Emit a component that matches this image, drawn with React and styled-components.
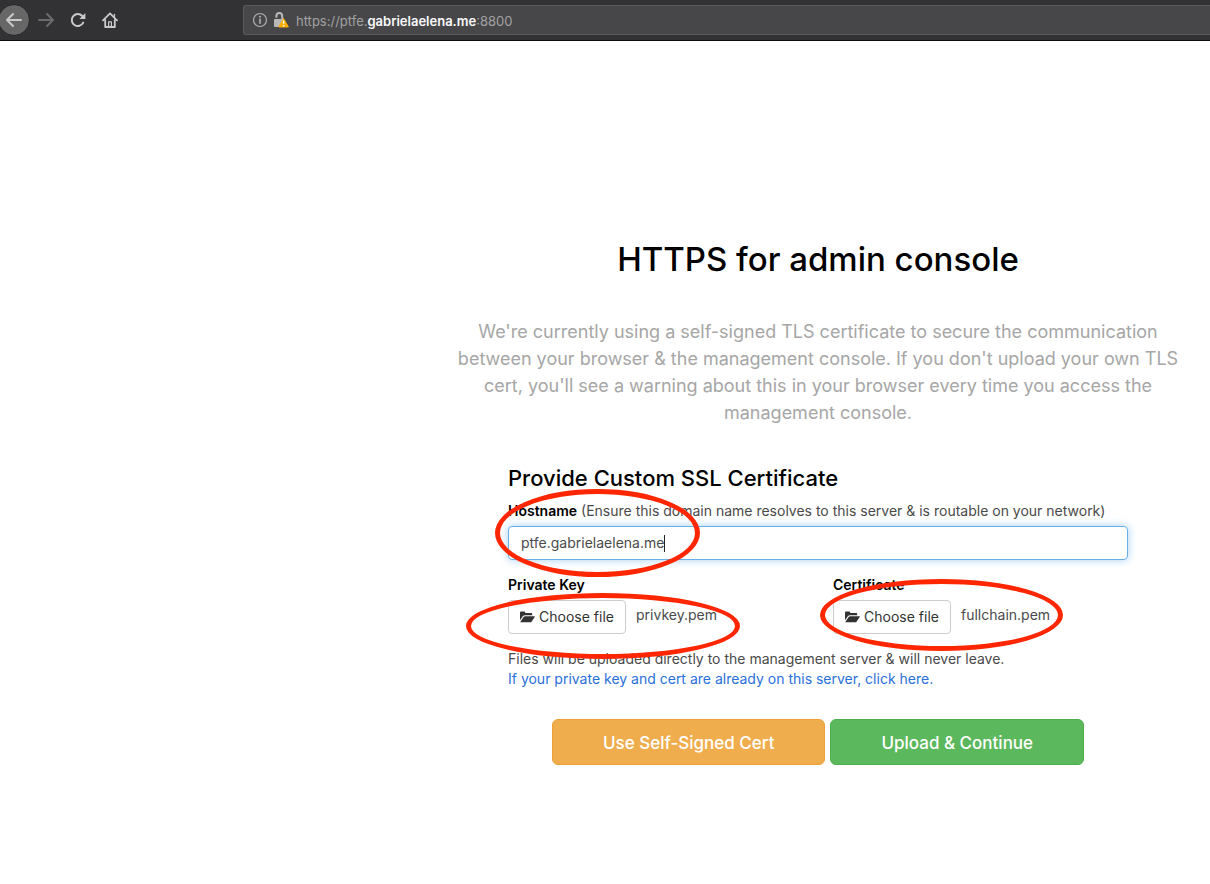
import React, { useState } from "react";
import styled, { createGlobalStyle } from "styled-components";

const GlobalStyle = createGlobalStyle`
  *, *::before, *::after { box-sizing: border-box; }
  body {
    margin: 0;
    background: #fff;
    color: #4a4a4a;
    font: 14px/20px Inter, "Liberation Sans", sans-serif;
    overflow-x: hidden;
  }
  button, input { font: inherit; }
`;

const Toolbar = styled.header`
  display: flex;
  align-items: center;
  height: 41px;
  background: #323234;
  border-bottom: 1px solid #0c0c0d;
`;

const NavGroup = styled.nav`
  display: flex;
  align-items: center;
  flex: 0 0 243px;
`;

const NavButton = styled.button`
  display: grid;
  place-items: center;
  width: 32px;
  height: 32px;
  padding: 0;
  border: 0;
  background: none;
  color: ${(p) => (p.$dim ? "#6b6b6d" : "#c9c9ca")};
`;

const BackButton = styled(NavButton)`
  margin-left: -2px;
  border-radius: 50%;
  border: 1px solid #232324;
  background: #676768;
`;

const AddressBar = styled.div`
  display: flex;
  align-items: center;
  flex: 1;
  height: 30px;
  padding-left: 8px;
  border: 1px solid #5a5a5c;
  border-right: 0;
  border-radius: 3px 0 0 3px;
  background: #474749;
  color: #b1b1b2;
`;

const LockBadge = styled.span`
  display: flex;
  margin-left: 5px;
`;

const Url = styled.span`
  margin-left: 7px;
  padding-top: 1px;
  color: #a2a2a3;
  font-size: 13px;
  white-space: nowrap;
  b { color: #f9f9fa; font-weight: 600; }
`;

const Main = styled.main`
  display: flex;
  flex-direction: column;
  align-items: center;
  margin-left: 426px;
  padding: 197px 24px 40px;
`;

const Title = styled.h1`
  margin: 0 0 38px;
  color: #000;
  font-size: 33px;
  line-height: 42px;
  font-weight: 500;
  white-space: nowrap;
`;

const Lead = styled.p`
  margin: 0 0 38px;
  max-width: 730px;
  color: #a6a6a6;
  font-size: 18px;
  line-height: 27px;
  text-align: center;
`;

const Form = styled.form`
  width: 100%;
  max-width: 620px;
`;

const Heading = styled.h2`
  margin: 0 0 9px;
  color: #000;
  font-size: 22px;
  line-height: 28px;
  font-weight: 500;
`;

const Field = styled.div`
  position: relative;
  flex: 1;
`;

const Label = styled.label`
  color: #000;
  font-weight: 600;
`;

const InputBox = styled.div`
  display: flex;
  align-items: center;
  height: 34px;
  margin: 5px 0 15px;
  padding: 0 12px;
  border: 1px solid #66afe9;
  border-radius: 4px;
  box-shadow: 0 0 8px rgba(102, 175, 233, 0.6);
`;

const TextInput = styled.input`
  field-sizing: content;
  min-width: 20px;
  padding: 0;
  border: 0;
  outline: 0;
  background: none;
  color: #4a4a4a;
  caret-color: transparent;
`;

const Caret = styled.span`
  width: 1px;
  height: 17px;
  background: #222;
`;

const FileFields = styled.div`
  display: flex;
  gap: 30px;
  margin-bottom: 15px;
`;

const FileRow = styled.div`
  display: flex;
  gap: 10px;
  margin-top: 5px;
`;

const FileName = styled.span`
  padding-top: 5px;
`;

const FileButton = styled.button`
  display: flex;
  align-items: center;
  justify-content: center;
  gap: 4px;
  width: 118px;
  height: 34px;
  padding: 0;
  border: 1px solid #ccc;
  border-radius: 4px;
  background: #fff;
  color: #333;
  white-space: nowrap;
`;

const Help = styled.p`
  margin: 0;
  a { color: #2a6fdb; text-decoration: none; }
`;

const Actions = styled.div`
  display: flex;
  justify-content: center;
  gap: 5px;
  margin-top: 30px;
`;

const ActionButton = styled.button`
  height: 46px;
  padding: 2px 50px 0;
  border: 1px solid ${(p) => (p.$warn ? "#eea236" : "#4cae4c")};
  border-radius: 6px;
  background: ${(p) => (p.$warn ? "#f0ad4e" : "#5cb85c")};
  color: #fff;
  font-size: 17px;
  line-height: 24px;
  font-weight: 500;
  white-space: nowrap;
`;

const Ring = styled.span`
  position: absolute;
  top: ${(p) => p.$top}px;
  left: ${(p) => p.$left}px;
  width: ${(p) => p.$w}px;
  height: ${(p) => p.$h}px;
  border: 5px solid #ff2600;
  border-radius: 50%;
  pointer-events: none;
`;

const stroke = { fill: "none", stroke: "currentColor", strokeWidth: 2, strokeLinecap: "round", strokeLinejoin: "round" };

const ArrowIcon = ({ flip }) => (
  <svg width="16" height="16" viewBox="0 0 16 16" {...stroke}>
    <path d={flip ? "M1 8h14M9 2l6 6-6 6" : "M15 8H1M7 2L1 8l6 6"} />
  </svg>
);

const ReloadIcon = () => (
  <svg width="16" height="16" viewBox="0 0 16 16" {...stroke}>
    <path d="M13.2 10.6A6 6 0 1 1 12.3 4" />
    <path d="M15.4 1v6H9.4z" fill="currentColor" stroke="none" />
  </svg>
);

const HomeIcon = () => (
  <svg width="16" height="16" viewBox="0 0 16 16" {...stroke} strokeWidth="1.8">
    <path d="M1 8.4L8 1.4l7 7M3.2 8V15h9.6V8" />
    <path d="M12.4 2.4v2.4" strokeWidth="1.4" />
    <path d="M6.6 14V9.8h2.8V14" strokeWidth="1.2" />
  </svg>
);

const InfoIcon = () => (
  <svg width="16" height="16" viewBox="0 0 16 16" {...stroke} strokeWidth="1.2">
    <circle cx="8" cy="8" r="6.5" />
    <path d="M8 7.4v3.8" strokeWidth="1.6" />
    <circle cx="8" cy="4.8" r="1" fill="currentColor" stroke="none" />
  </svg>
);

const LockIcon = () => (
  <svg width="16" height="16" viewBox="0 0 16 16">
    <path d="M3.4 5.8V4a2.9 2.9 0 0 1 5.8 0v4" fill="none" stroke="#b9b9ba" strokeWidth="2" />
    <rect x="1" y="7" width="10" height="8" rx="1" fill="#b9b9ba" />
    <path d="M10.6 6.6L15.4 15H5.8z" fill="#ffae00" stroke="#ffae00" strokeLinejoin="round" />
    <path d="M10.6 8.6v3.2M10.6 13v1.4" stroke="#fff" strokeWidth="1.4" />
  </svg>
);

const FolderIcon = () => (
  <svg width="15" height="12" viewBox="0 0 15 12" fill="currentColor">
    <path d="M0 9.2V1.4Q0 .4 1 .4h3.2q1 0 1 1V2h6q1 0 1 1v1.2H5q-1.4 0-2.2 1z" />
    <path d="M.3 10.9l3.3-4.8Q4.2 5.2 5.2 5.2h9.1q1 0 .4.9l-3 4.3q-.6.9-1.7.9H.8q-.7 0-.5-.4z" />
  </svg>
);

const FileField = ({ id, label, file, ring }) => (
  <Field>
    <Label htmlFor={id}>{label}</Label>
    <FileRow>
      <FileButton type="button" id={id}>
        <FolderIcon />
        Choose file
      </FileButton>
      <FileName>{file}</FileName>
    </FileRow>
    <Ring {...ring} />
  </Field>
);

export default function App() {
  const [host, setHost] = useState("ptfe.gabrielaelena.me");
  return (
    <>
      <GlobalStyle />
      <Toolbar>
        <NavGroup aria-label="Browser">
          <BackButton aria-label="Back"><ArrowIcon /></BackButton>
          <NavButton $dim aria-label="Forward"><ArrowIcon flip /></NavButton>
          <NavButton aria-label="Reload"><ReloadIcon /></NavButton>
          <NavButton aria-label="Home"><HomeIcon /></NavButton>
        </NavGroup>
        <AddressBar>
          <InfoIcon />
          <LockBadge><LockIcon /></LockBadge>
          <Url>https://ptfe.<b>gabrielaelena.me</b>:8800</Url>
        </AddressBar>
      </Toolbar>
      <Main>
        <Title>HTTPS for admin console</Title>
        <Lead>
          We're currently using a self-signed TLS certificate to secure the communication
          between your browser &amp; the management console. If you don't upload your own TLS
          cert, you'll see a warning about this in your browser every time you access the
          management console.
        </Lead>
        <Form onSubmit={(e) => e.preventDefault()}>
          <Heading>Provide Custom SSL Certificate</Heading>
          <Field>
            <Label htmlFor="hostname">Hostname</Label>{" "}
            (Ensure this domain name resolves to this server &amp; is routable on your network)
            <InputBox>
              <TextInput id="hostname" type="text" value={host} onChange={(e) => setHost(e.target.value)} />
              <Caret />
            </InputBox>
            <Ring $top={-12} $left={-13} $w={205} $h={88} />
          </Field>
          <FileFields>
            <FileField id="private-key" label="Private Key" file="privkey.pem" ring={{ $top: 18, $left: -42, $w: 274, $h: 66 }} />
            <FileField id="certificate" label="Certificate" file="fullchain.pem" ring={{ $top: 4, $left: -13, $w: 243, $h: 72 }} />
          </FileFields>
          <Help>Files will be uploaded directly to the management server &amp; will never leave.</Help>
          <Help><a href="#server-files">If your private key and cert are already on this server, click here.</a></Help>
          <Actions>
            <ActionButton $warn type="button">Use Self-Signed Cert</ActionButton>
            <ActionButton type="submit">Upload &amp; Continue</ActionButton>
          </Actions>
        </Form>
      </Main>
    </>
  );
}
